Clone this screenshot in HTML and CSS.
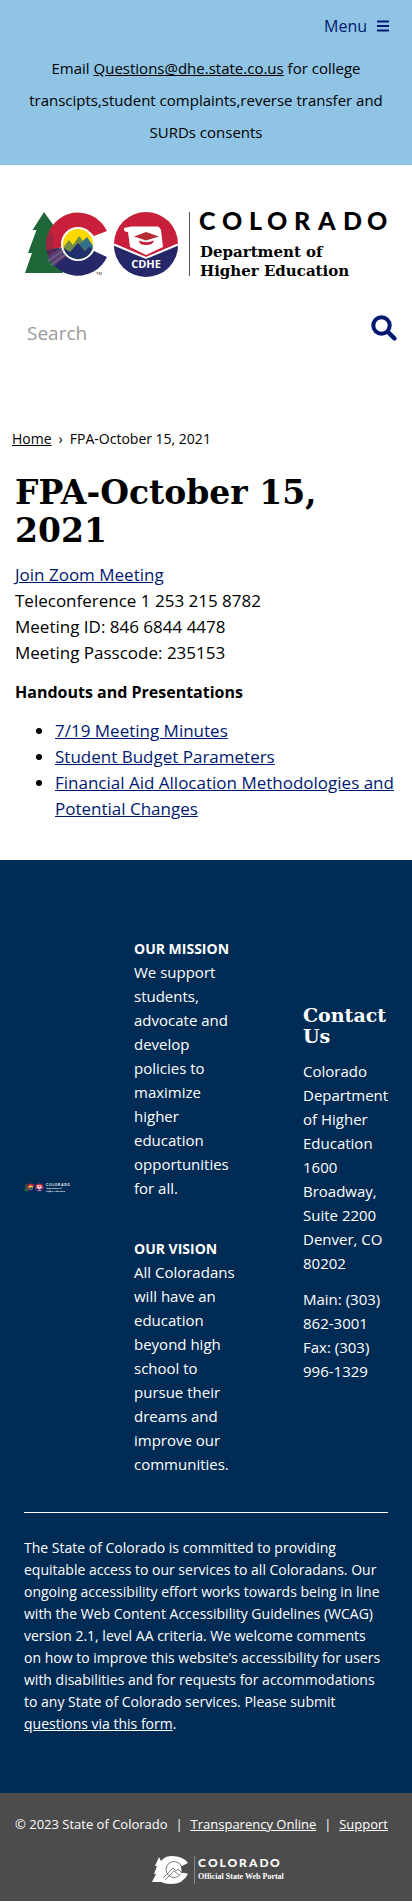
FILE: index.html
```html
<!DOCTYPE html>
<html lang="en">
<head>
<meta charset="utf-8">
<meta name="viewport" content="width=device-width, initial-scale=1">
<title>FPA-October 15, 2021</title>
<link rel="stylesheet" href="styles.css">
</head>
<body>
<header class="topbar">
  <button class="menu" type="button">Menu
    <svg class="menu-icon" viewBox="0 0 12 12" aria-hidden="true"><path d="M0 1.500h12M0 6h12M0 10.500h12" stroke="currentColor" stroke-width="2"/></svg>
  </button>
  <p class="notice">Email <a href="mailto:Questions@dhe.state.co.us">Questions@dhe.state.co.us</a> for college transcipts,student complaints,reverse transfer and SURDs consents</p>
</header>

<div class="brand">
  <a href="#" aria-label="Colorado Department of Higher Education">
    <svg class="logo" viewBox="0 0 364 72">
      <defs>
        <symbol id="emblem" viewBox="0 0 154 72" overflow="visible">
          <path d="M20 4 8.500 22h4L4 45h4L1 65h38L33 22z" fill="#1f6638"/>
          <path d="M83 23A32 32 0 0 0 22.500 42L40 39A17 17 0 0 1 70 28z" fill="#c8203a"/>
          <path d="M22.500 42A32 32 0 0 0 83 49L70 43A17 17 0 0 1 39 40z" fill="#262768"/>
          <path d="M22 36q1-9 4-13l4 6q-2 6 0 14l10-3 4 8-14 9q-8-9-8-21z" fill="#7d2c48" opacity=".55"/>
          <path d="M23 49 39 38l4 9-14 12z" fill="#5b4a78" opacity=".7"/>
          <circle cx="54" cy="36" r="17" fill="#fff"/>
          <circle cx="54" cy="36" r="15" fill="#ffd800"/>
          <path d="M39.500 39 45 32l4 5 6-9 5 6 4-3 5 8A15 15 0 0 1 39.500 39z" fill="#6f8c42"/>
          <path d="M55 37l8-8 6 9-3 7z" fill="#32708a"/>
          <path d="M39.500 40 46 44l8-9 7 8 4-4 3.500 1A15 15 0 0 1 39.500 40z" fill="#20306f"/>
          <path d="M24 53 40 42M27 57 42 46" stroke="#8f86a8" stroke-width=".8"/>
          <text x="72" y="67" font-size="4" fill="#222" font-family="Liberation Sans">TM</text>
          <circle cx="122" cy="36" r="32" fill="#c8203a"/>
          <path d="M90 37a32 32 0 0 0 64 0l-32 13z" fill="#262768"/>
          <path d="M90 36.500 122 50l32-13.500" fill="none" stroke="#fff" stroke-width="2"/>
          <path d="M100 20q-1 4 4 4l2 15 16 8 17-8-2-17-2-3h-30z" fill="#fff"/>
          <path d="M106 19.500h28" stroke="#fff" stroke-width="2"/>
          <path d="m110 28.500 12-4.500 13 4.500-13 4z" fill="#b62e35"/>
          <path d="M115 32.500q7 3.500 15 0-1 4.500-8 4.500t-7-4.500z" fill="#c8203a"/>
        </symbol>
      </defs>
      <use href="#emblem" x="0" y="0" width="154" height="72"/>
      <text class="seal" x="122" y="60" text-anchor="middle">CDHE</text>
      <path class="rule" d="M165.500 4v64"/>
      <g class="ink">
        <text class="state" y="22" x="175 198 225 243 270 294 319 343">COLORADO</text>
        <text class="dept" x="176" y="49">Department of</text>
        <text class="dept" x="176" y="68">Higher Education</text>
      </g>
    </svg>
  </a>
</div>

<form class="search" role="search">
  <input class="search-input" type="search" placeholder="Search" aria-label="Search">
  <button class="search-btn" type="button" aria-label="Search">
    <svg viewBox="0 0 26 26" aria-hidden="true"><circle cx="10.500" cy="10.500" r="8.200" fill="none" stroke="currentColor" stroke-width="4"/><path d="m17 17 6.500 6.500" stroke="currentColor" stroke-width="4.400" stroke-linecap="round"/></svg>
  </button>
</form>

<nav class="crumbs" aria-label="Breadcrumb"><a href="#">Home</a><span>›</span><span>FPA-October 15, 2021</span></nav>

<main class="content">
  <h1>FPA-October 15, 2021</h1>
  <p><a href="#">Join Zoom Meeting</a><br>Teleconference 1 253 215 8782<br>Meeting ID: 846 6844 4478<br>Meeting Passcode: 235153</p>
  <p><strong>Handouts and Presentations</strong></p>
  <ul>
    <li><a href="#">7/19 Meeting Minutes</a></li>
    <li><a href="#">Student Budget Parameters</a></li>
    <li><a href="#">Financial Aid Allocation Methodologies and Potential Changes</a></li>
  </ul>
</main>

<footer>
  <div class="info">
    <div class="columns">
      <svg class="mini-logo" viewBox="0 0 364 72" aria-hidden="true">
        <use href="#emblem" x="0" y="0" width="154" height="72"/>
        <text class="seal" x="122" y="60" text-anchor="middle">CDHE</text>
        <g fill="#fff">
          <text class="state" y="22" x="175 198 225 243 270 294 319 343">COLORADO</text>
          <text class="dept" x="176" y="49">Department of</text>
          <text class="dept" x="176" y="68">Higher Education</text>
        </g>
      </svg>
      <div class="mission">
        <p><strong>OUR MISSION</strong><br>We support students, advocate and develop policies to maximize higher education opportunities for all.</p>
        <p><strong>OUR VISION</strong><br>All Coloradans will have an education beyond high school to pursue their dreams and improve our communities.</p>
      </div>
      <div class="contact">
        <h2>Contact Us</h2>
        <p>Colorado Department of Higher Education<br>1600 Broadway, Suite 2200<br>Denver, CO 80202</p>
        <p>Main: (303) 862-3001<br>Fax: (303) 996-1329</p>
      </div>
    </div>
    <hr>
    <p class="access">The State of Colorado is committed to providing equitable access to our services to all Coloradans. Our ongoing accessibility effort works towards being in line with the Web Content Accessibility Guidelines (WCAG) version 2.1, level AA criteria. We welcome comments on how to improve this website’s accessibility for users with disabilities and for requests for accommodations to any State of Colorado services. Please submit <a href="#">questions via this form</a>.</p>
  </div>
  <div class="legal">
    <p class="legal-row"><span>© 2023 State of Colorado</span><span>|</span><a href="#">Transparency Online</a><span>|</span><a href="#">Support</a></p>
    <a class="portal" href="#" aria-label="Colorado Official State Web Portal">
      <svg viewBox="0 0 136 28">
        <path d="M7 1 3 10h2L2 18h2L0 26h9q4 2 10 2 12 0 17-10l-6-2q-4 5-9 4-7-2-7-7 1-7 8-7 5 0 8 4l6-3Q31 0 20 0q-6 0-9 3L9 5z" fill="#fff"/>
        <circle cx="22" cy="13.500" r="8" fill="#fff"/>
        <path d="M29 9.500a8 8 0 1 0 0 8M11 22l10-10 3 3 2-2 4 4M13 24l9-9 5 4" fill="none" stroke="#4c4c4c" stroke-width=".7"/>
        <path d="m29 10 8 2v4l-7 1z" fill="#4c4c4c"/>
        <path d="M42.500 0v28" stroke="#888"/>
        <text class="portal-state" y="11" x="46 56 67.500 75.500 87 97 107.500 118">COLORADO</text>
        <text class="portal-sub" x="46" y="23">Official State Web Portal</text>
      </svg>
    </a>
  </div>
</footer>
</body>
</html>
```
FILE: styles.css
```css
* { box-sizing: border-box; }

body {
  margin: 0;
  background: #fff;
  color: #000;
  font: 16px/24px "Trebuchet MS", "Open Sans", sans-serif;
}

p { margin: 0; }
strong { line-height: 1; }
svg { overflow: visible; }

button {
  border: 0;
  background: none;
  color: #001970;
  font: inherit;
}

.topbar {
  padding: 12px 20px 17px;
  background: #8fc4e5;
}

.menu {
  display: flex;
  align-items: center;
  gap: 10px;
  margin-left: auto;
  padding: 0 3px 0 0;
  font-size: 16px;
  line-height: 28px;
}

.menu-icon { width: 12px; height: 12px; }

.notice {
  margin-top: 12px;
  text-align: center;
  font-size: 15px;
  line-height: 32px;
}

.notice a { color: inherit; }

.brand { padding: 43px 24px 0; }
.brand a, .portal { display: block; }
.logo, .mini-logo, .portal svg, .search-btn svg { display: block; width: 100%; }

.rule { stroke: #555; }
.seal { fill: #fff; font: 700 11px "Open Sans", sans-serif; }
.state { font: 900 25px Lato, sans-serif; }
.dept { font: 700 15px "DejaVu Serif", serif; }

.search {
  display: flex;
  align-items: flex-start;
  padding: 31px 15px 0 19px;
}

.search-input {
  flex: 1;
  min-width: 0;
  height: 44px;
  padding: 0 8px;
  border: 0;
  font: 19px "Trebuchet MS", "Open Sans", sans-serif;
}

.search-input::placeholder { color: #999; opacity: 1; }
.search-btn { width: 26px; padding: 4px 0 0; }

.crumbs {
  display: flex;
  gap: 7px;
  padding: 72px 12px 0;
  font-size: 14px;
}

.crumbs a { color: inherit; }

.content { padding: 23px 15px 25px; }

h1 {
  margin: 0 0 12px;
  font: 700 33px/38px "Museo Slab", "DejaVu Serif", serif;
}

.content p, .content ul {
  margin: 0 0 13px;
  font-size: 17px;
  line-height: 26px;
}

.content strong { font-size: 16px; }
.content ul { padding-left: 40px; }
.content a { color: #001970; }

.info {
  padding: 40px 24px 58px;
  background: #002b54;
  color: #fff;
}

.columns {
  display: grid;
  grid-template-columns: 46px 105px 85px;
  justify-content: space-between;
  align-items: center;
}

.mission, .contact { font-size: 15px; }
.mission { padding-top: 36px; }
.mission strong { font-size: 14px; }
.mission p + p { margin-top: 36px; }
.contact { padding-top: 11px; }
.contact p + p { margin-top: 12px; }

h2 {
  margin: 0 0 12px;
  font: 700 19px/21px "Museo Slab", "DejaVu Serif", serif;
}

hr {
  margin: 36px 0 24px;
  border: 0;
  border-top: 1px solid #fff;
}

.access { padding-right: 5px; font-size: 14px; line-height: 22px; }
.access a, .legal a { color: inherit; }

.legal {
  padding: 19px 24px 17px 15px;
  background: #4c4c4c;
  color: #fff;
}

.legal-row {
  display: flex;
  justify-content: space-between;
  font-size: 13px;
  white-space: nowrap;
}

.portal { width: 172px; margin: 20px auto 0; padding-left: 36px; }
.portal-state { fill: #fff; font: 900 12px Lato, sans-serif; }
.portal-sub { fill: #fff; font: 700 8px "Liberation Serif", serif; }
```
